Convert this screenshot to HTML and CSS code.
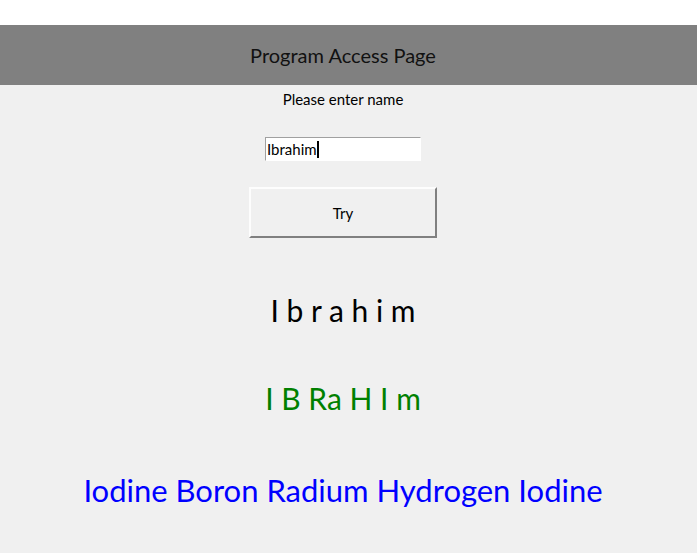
FILE: index.html
```html
<!DOCTYPE html>
<html>
<head>
<meta charset="utf-8">
<link rel="stylesheet" href="styles.css">
</head>
<body>
<div class="topstrip"></div>
<header class="header"><span class="title">Program Access Page</span></header>
<main class="main">
  <div class="prompt">Please enter name</div>
  <div class="field"><span class="value">Ibrahim</span><span class="caret"></span></div>
  <button class="btn">Try</button>
  <div class="out spaced">I b r a h i m</div>
  <div class="out green">I B Ra H I m</div>
  <div class="out blue">Iodine Boron Radium Hydrogen Iodine</div>
</main>
</body>
</html>
```
FILE: styles.css
```css
html, body {
  margin: 0;
  padding: 0;
  background: #ffffff;
  font-family: Lato, "Open Sans", sans-serif;
}
body {
  background: linear-gradient(#ffffff 0 85px, #f0f0f0 85px);
  min-height: 553px;
}
.topstrip {
  height: 25px;
  background: #ffffff;
}
.header {
  height: 60px;
  background: #808080;
  display: flex;
  align-items: center;
  justify-content: center;
  padding-right: 11px;
}
.title {
  font-size: 20px;
  color: #111111;
}
.main {
  background: #f0f0f0;
  height: 468px;
  display: flex;
  flex-direction: column;
  align-items: center;
  padding-right: 11px;
}
.prompt {
  margin-top: 5px;
  font-size: 15px;
  line-height: 18px;
  color: #000;
}
.field {
  margin-top: 29px;
  width: 153px;
  height: 22px;
  background: #ffffff;
  border-top: 1px solid #a0a0a0;
  border-left: 1px solid #a0a0a0;
  border-right: 1px solid #ffffff;
  border-bottom: 1px solid #ffffff;
  display: flex;
  align-items: center;
  padding-left: 1px;
  font-size: 15px;
}
.caret {
  display: inline-block;
  width: 2px;
  height: 17px;
  background: #000;
}
.btn {
  margin-top: 26px;
  width: 188px;
  height: 51px;
  background: #f0f0f0;
  border-top: 2px solid #fdfdfd;
  border-left: 2px solid #fdfdfd;
  border-right: 2px solid #808080;
  border-bottom: 2px solid #808080;
  font-family: Lato, sans-serif;
  font-size: 15px;
  color: #000;
  padding: 0;
}
.out {
  font-size: 30px;
  line-height: 40px;
}
.spaced {
  margin-top: 52px;
  color: #000;
}
.green {
  margin-top: 48px;
  color: #008000;
}
.blue {
  margin-top: 52px;
  font-size: 31px;
  color: #0000ff;
}
```
